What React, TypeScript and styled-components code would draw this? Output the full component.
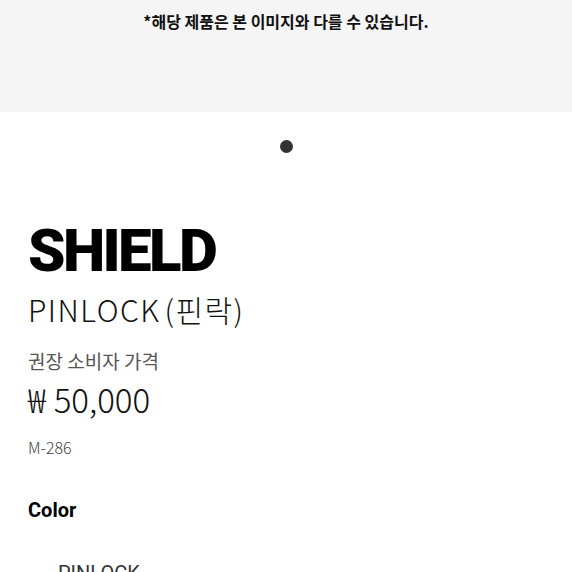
import React from "react";
import styled, { createGlobalStyle } from "styled-components";

const Global = createGlobalStyle`
  html, body { margin: 0; padding: 0; background: #fff; }
  body { font-family: "Noto Sans CJK KR", "Noto Sans", sans-serif; color: #111; overflow: hidden; }
`;

const Page = styled.div`
  width: 572px;
  height: 572px;
  overflow: hidden;
`;

const Banner = styled.div`
  height: 112px;
  background: #f5f5f5;
  display: flex;
  justify-content: center;
  align-items: flex-start;
  padding-top: 10px;
  box-sizing: border-box;
`;

const Notice = styled.p`
  margin: 0;
  font-size: 16px;
  font-weight: 700;
  line-height: 22px;
  color: #111;
`;

const Pager = styled.div`
  display: flex;
  justify-content: center;
  padding-top: 28px;
`;

const Dot = styled.span`
  width: 13px;
  height: 13px;
  border-radius: 50%;
  background: #333;
`;

const Info = styled.section`
  padding: 0 28px;
  display: flex;
  flex-direction: column;
`;

const Title = styled.h1`
  margin: 68px 0 0;
  font-family: Roboto, "Noto Sans", sans-serif;
  font-weight: 900;
  font-size: 60px;
  line-height: 60px;
  letter-spacing: -2.6px;
  color: #000;
`;

const Subtitle = styled.h2`
  margin: 8px 0 0;
  font-weight: 300;
  font-size: 30px;
  line-height: 40px;
  letter-spacing: 1.5px;
  color: #111;
`;

const Paren = styled.span`
  margin-left: 4px;
`;

const PriceLabel = styled.div`
  margin-top: 19px;
  font-size: 19px;
  line-height: 26px;
  font-weight: 400;
  color: #555;
`;

const Price = styled.div`
  margin-top: 5px;
  font-size: 33px;
  line-height: 40px;
  font-weight: 300;
  color: #111;
`;

const Currency = styled.span`
  margin-right: 8px;
`;

const Code = styled.div`
  margin-top: 16px;
  font-size: 16px;
  line-height: 24px;
  font-weight: 300;
  color: #444;
`;

const ColorLabel = styled.div`
  margin-top: 37px;
  font-family: Roboto, "Noto Sans", sans-serif;
  font-size: 20px;
  line-height: 28px;
  font-weight: 700;
  color: #000;
`;

const OptionRow = styled.div`
  margin-top: 37px;
  padding: 0 82px 0 58px;
  display: flex;
  justify-content: space-between;
  align-items: flex-start;
`;

const OptionName = styled.span`
  font-family: Roboto, "Noto Sans", sans-serif;
  font-size: 20px;
  line-height: 24px;
  font-weight: 400;
  color: #333;
`;

const OptionMark = styled.span`
  font-size: 10px;
  line-height: 24px;
  color: #bbb;
  padding-top: 8px;
`;

export default function App() {
  return (
    <Page>
      <Global />
      <Banner>
        <Notice>*해당 제품은 본 이미지와 다를 수 있습니다.</Notice>
      </Banner>
      <Pager>
        <Dot />
      </Pager>
      <Info>
        <Title>SHIELD</Title>
        <Subtitle>
          PINLOCK<Paren>(핀락)</Paren>
        </Subtitle>
        <PriceLabel>권장 소비자 가격</PriceLabel>
        <Price>
          <Currency>₩</Currency>50,000
        </Price>
        <Code>M-286</Code>
        <ColorLabel>Color</ColorLabel>
      </Info>
      <OptionRow>
        <OptionName>PINLOCK</OptionName>
        <OptionMark>··</OptionMark>
      </OptionRow>
    </Page>
  );
}
